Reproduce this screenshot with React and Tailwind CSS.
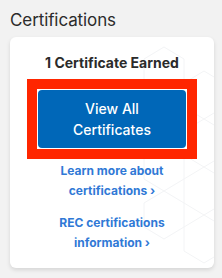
import React from "react";

function HexPattern() {
  return (
    <svg
      className="absolute right-0 top-0 h-full w-[110px] pointer-events-none"
      viewBox="0 0 110 231"
      fill="none"
      stroke="#f3f4f6"
      strokeWidth="1"
    >
      <path d="M60 10 L80 22 L80 46 L60 58 L40 46 L40 22 Z" />
      <path d="M100 34 L120 46 L120 70 L100 82 L80 70 L80 46 Z" />
      <path d="M60 58 L80 70 L80 94 L60 106 L40 94 L40 70 Z" />
      <path d="M100 82 L120 94 L120 118 L100 130 L80 118 L80 94 Z" />
      <path d="M60 106 L80 118 L80 142 L60 154 L40 142 L40 118 Z" />
      <path d="M100 130 L120 142 L120 166 L100 178 L80 166 L80 142 Z" />
      <path d="M60 154 L80 166 L80 190 L60 202 L40 190 L40 166 Z" />
      <path d="M100 178 L120 190 L120 214 L100 226 L80 214 L80 190 Z" />
    </svg>
  );
}

export default function App() {
  return (
    <div
      className="w-[222px] h-[278px] bg-[#f2f2f2] px-[10px] pt-[8px]"
      style={{ fontFamily: "Inter, 'Noto Sans', sans-serif" }}
    >
      <h2 className="text-[17px] leading-[25px] text-[#2b2b2b] tracking-[-0.1px]">
        Certifications
      </h2>
      <div className="relative mt-[4px] w-[204px] h-[231px] rounded-[6px] bg-white shadow-[0_2px_4px_rgba(0,0,0,0.12)] overflow-hidden">
        <HexPattern />
        <div className="relative flex flex-col items-center pt-[16px]">
          <p className="text-[14px] leading-[20px] font-bold text-[#2b2b2b]">
            1 Certificate Earned
          </p>
          <div className="mt-[6px] border-[10px] border-[#ff2600] bg-white p-[1px]">
            <button className="w-[148px] h-[58px] rounded-[4px] bg-[#0067b8] text-white text-[14px] leading-[21px] font-medium">
              View All
              <br />
              Certificates
            </button>
          </div>
          <a className="mt-[2px] text-center text-[12px] leading-[20px] font-bold text-[#3079d6]">
            Learn more about
            <br />
            certifications ›
          </a>
          <a className="mt-[12px] text-center text-[12px] leading-[20px] font-bold text-[#3079d6]">
            REC certifications
            <br />
            information ›
          </a>
        </div>
      </div>
    </div>
  );
}
